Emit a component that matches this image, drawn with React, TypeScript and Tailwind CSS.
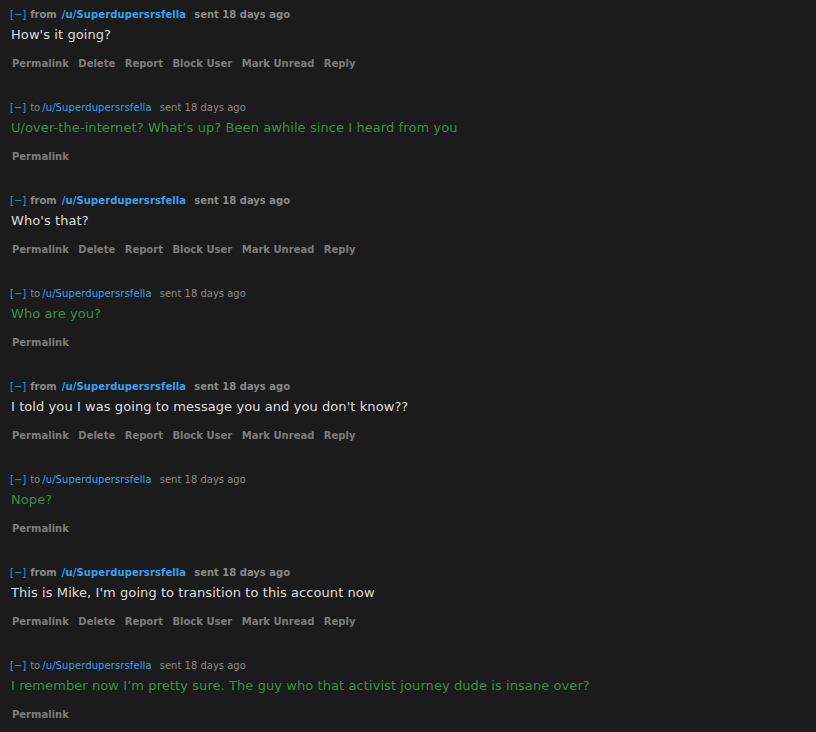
import React from 'react';

type Message = {
    dir: 'from' | 'to';
    body: string;
};

const messages: Message[] = [
    { dir: 'from', body: "How's it going?" },
    { dir: 'to', body: 'U/over-the-internet? What\u2019s up? Been awhile since I heard from you' },
    { dir: 'from', body: "Who's that?" },
    { dir: 'to', body: 'Who are you?' },
    { dir: 'from', body: "I told you I was going to message you and you don't know??" },
    { dir: 'to', body: 'Nope?' },
    { dir: 'from', body: "This is Mike, I'm going to transition to this account now" },
    { dir: 'to', body: 'I remember now I\u2019m pretty sure. The guy who that activist journey dude is insane over?' },
];

const fromActions = ['Permalink', 'Delete', 'Report', 'Block User', 'Mark Unread', 'Reply'];

const MessageRow: React.FC<{ msg: Message }> = ({ msg }) => {
    const isFrom = msg.dir === 'from';
    const actions = isFrom ? fromActions : ['Permalink'];

    return (
        <div className="pt-[9px] pb-[23px] pl-[10px]">
            <div className="flex items-center text-[10px] leading-[12px] whitespace-nowrap">
                <span className="text-[#3f98d0]">[&minus;]</span>
                <span className={isFrom ? 'ml-1 font-bold text-[#8a8a8a]' : 'ml-1 text-[#8a8a8a]'}>{msg.dir}</span>
                <span className={isFrom ? 'ml-[5px] font-bold text-[#3aa0ef] tracking-[0.1px]' : 'ml-[2px] text-[#3aa0ef] tracking-[0.1px]'}>/u/Superdupersrsfella</span>
                <span className={isFrom ? 'ml-[8px] font-bold text-[#8a8a8a]' : 'ml-[8px] text-[#8a8a8a]'}>sent 18 days ago</span>
            </div>
            <p className={`mt-[5px] ml-px text-[13px] leading-[18px] tracking-[0.08px] ${isFrom ? 'text-[#dedede]' : 'text-[#3c8f46]'}`}>
                {msg.body}
            </p>
            <ul className="mt-[14px] ml-[2px] flex gap-[9.5px] text-[10px] leading-[12px] font-bold text-[#7d7d7d]">
                {actions.map(a => (
                    <li key={a}>{a}</li>
                ))}
            </ul>
        </div>
    );
};

const App: React.FC = () => {
    return (
        <div className="min-h-screen bg-[#1b1b1b] font-['DejaVu_Sans','Verdana',sans-serif]">
            {messages.map((m, i) => (
                <MessageRow key={i} msg={m} />
            ))}
        </div>
    );
};

export default App;
